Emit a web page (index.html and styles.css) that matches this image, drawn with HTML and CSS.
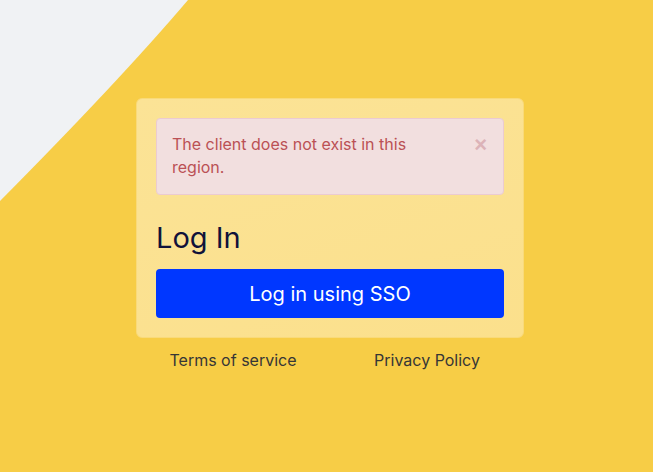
FILE: index.html
```html
<!DOCTYPE html>
<html lang="en">
<head>
    <meta charset="UTF-8">
    <meta name="viewport" content="width=device-width, initial-scale=1.0">
    <title>Log In</title>
    <link rel="stylesheet" href="styles.css">
</head>
<body>

    <!-- grey corner shape behind everything -->
    <svg class="backdrop" width="653" height="472" viewBox="0 0 653 472" aria-hidden="true">
        <path d="M0 0 H188 Q120 80 0 201 Z" fill="#f0f2f4"/>
    </svg>

    <div class="login-wrap">
        <div class="login-card">
            <div class="alert">
                <span class="alert-text">The client does not exist in this region.</span>
                <button class="alert-close" aria-label="Close">&times;</button>
            </div>

            <h1 class="login-title">Log In</h1>
            <button class="sso-button">Log in using SSO</button>
        </div>

        <div class="login-links">
            <a href="#">Terms of service</a>
            <a href="#">Privacy Policy</a>
        </div>
    </div>

</body>
</html>
```

FILE: styles.css
```css
html, body {
    height: 100%;
}
body {
    margin: 0;
    background: #f7cd46;
    font-family: Inter, "Noto Sans", sans-serif;
    overflow: hidden;
}
.backdrop {
    position: absolute;
    top: 0;
    left: 0;
}
.login-wrap {
    position: relative;
    width: 388px;
    margin: 98px 0 0 136px;
}
.login-card {
    background: linear-gradient(160deg, #fbe396, #fbe08c);
    border: 1px solid #f9da7a;
    border-radius: 6px;
    padding: 19px;
}
.alert {
    display: flex;
    justify-content: space-between;
    align-items: flex-start;
    background: #f2dfdf;
    border: 1px solid #ebcbd1;
    border-radius: 4px;
    padding: 14px 15px 15px 15px;
    color: #bb5155;
    font-size: 16px;
    line-height: 23px;
}
.alert-text {
    width: 270px;
}
.alert-close {
    background: none;
    border: 0;
    padding: 0;
    margin: 0 1px 0 0;
    color: #dcb3b8;
    font-size: 22px;
    font-weight: bold;
    line-height: 23px;
    font-family: Arial, sans-serif;
}
.login-title {
    margin: 23px 0 11px 0;
    font-size: 29px;
    font-weight: 400;
    line-height: 40px;
    color: #11123a;
}
.sso-button {
    display: block;
    width: 100%;
    height: 49px;
    border: 0;
    border-radius: 4px;
    background: #0037ff;
    color: #fff;
    font-family: Inter, sans-serif;
    font-size: 20px;
}
.login-links {
    display: grid;
    grid-template-columns: 1fr 1fr;
    margin-top: 10px;
    text-align: center;
}
.login-links a {
    color: #363636;
    font-size: 16px;
    line-height: 24px;
    text-decoration: none;
}
```
